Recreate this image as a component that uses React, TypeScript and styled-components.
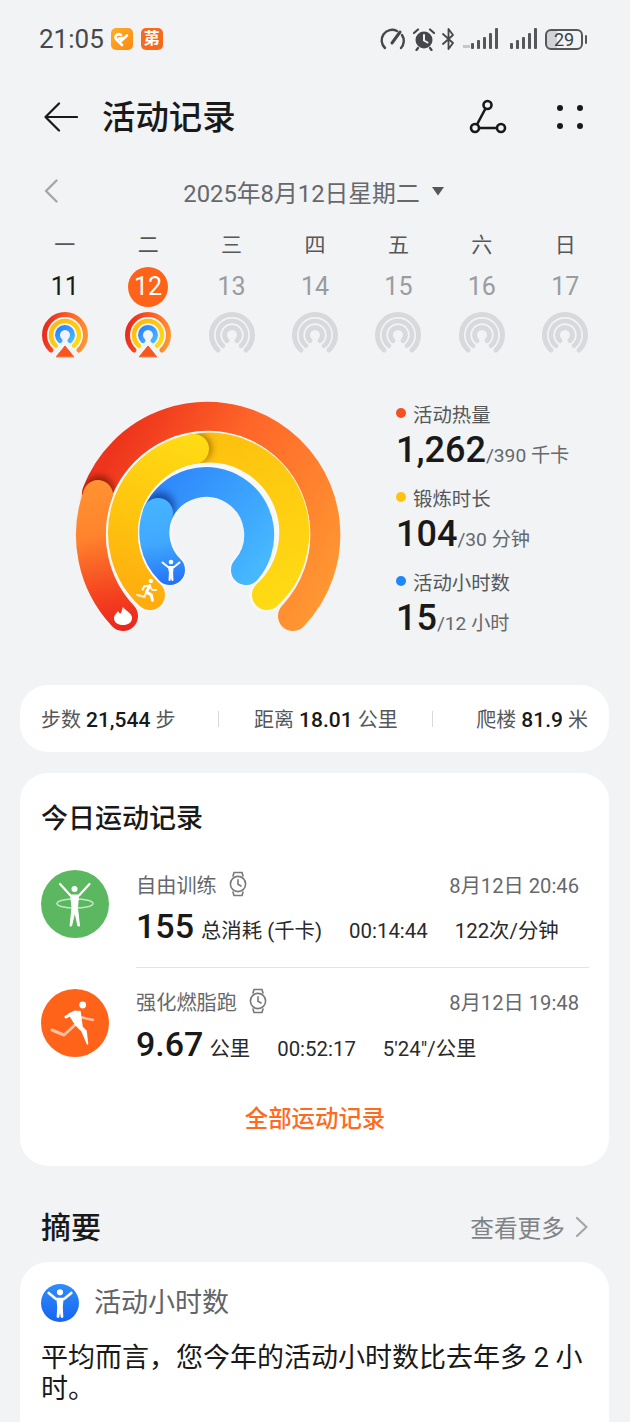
import React from 'react';
import styled, { createGlobalStyle } from 'styled-components';

const GlobalStyle = createGlobalStyle`
  html, body {
    margin: 0;
    padding: 0;
    background: #f1f3f5;
    font-family: Roboto, "Noto Sans CJK SC", sans-serif;
    color: #191919;
  }
`;

const Page = styled.div`
  width: 630px;
  height: 1422px;
  overflow: hidden;
  background: #f1f3f5;
`;

const StatusBar = styled.div`
  height: 78px;
  padding: 0 42px 0 39px;
  box-sizing: border-box;
  display: flex;
  align-items: center;
  color: #45474a;
`;

const Time = styled.span`
  font-size: 26px;
  line-height: 1;
  margin-right: 7px;
`;

const AppBadge = styled.div<{ $bg: string }>`
  width: 22px;
  height: 22px;
  border-radius: 5px;
  background: ${({ $bg }) => $bg};
  margin-right: 8px;
  display: flex;
  align-items: center;
  justify-content: center;
  color: #fff;
  font-size: 16px;
  line-height: 1;
  font-weight: 700;
  overflow: hidden;
`;

const StatusIcons = styled.div`
  margin-left: auto;
  display: flex;
  align-items: center;
`;

const Glyph = styled.span<{ $left?: number }>`
  display: flex;
  margin-left: ${({ $left }) => $left ?? 0}px;
`;

const Battery = styled.div`
  width: 38px;
  height: 21px;
  margin-left: 8px;
  margin-right: 5px;
  box-sizing: border-box;
  border: 2px solid #55575a;
  border-radius: 6px;
  background: linear-gradient(90deg, #d0d2d5 30%, #f1f3f5 30%);
  font-size: 18px;
  line-height: 17px;
  text-align: center;
  color: #3b3d40;
  position: relative;
  &::after {
    content: '';
    position: absolute;
    right: -6px;
    top: 4px;
    width: 2px;
    height: 9px;
    background: #55575a;
    border-radius: 1px;
  }
`;

const Header = styled.div`
  height: 78px;
  padding: 0 46px 0 44px;
  display: flex;
  align-items: center;
`;

const Title = styled.h1`
  margin: 1px 0 0 24px;
  font-size: 33.4px;
  line-height: 1;
  font-weight: 500;
  color: #191919;
`;

const HeaderActions = styled.div`
  margin-left: auto;
  display: flex;
  align-items: center;
  gap: 49px;
`;

const DateRow = styled.div`
  height: 70px;
  position: relative;
  display: flex;
  align-items: center;
  justify-content: center;
  color: #66686b;
  font-size: 23.8px;
  gap: 11px;
  padding-right: 2px;
`;

const DatePrev = styled.svg`
  position: absolute;
  left: 44px;
  top: 23px;
`;

const WeekGrid = styled.div`
  padding: 0 23px;
  display: grid;
  grid-template-columns: repeat(7, 1fr);
`;

const DayColumn = styled.div`
  display: flex;
  flex-direction: column;
  align-items: center;
`;

const WeekDay = styled.div`
  height: 38px;
  font-size: 21px;
  line-height: 38px;
  color: #55575a;
`;

const DayNumber = styled.div<{ $state: 'done' | 'today' | 'future' }>`
  width: 40px;
  height: 40px;
  margin-top: 3px;
  border-radius: 50%;
  font-size: 25px;
  line-height: 40px;
  text-align: center;
  color: ${({ $state }) => ($state === 'done' ? '#191919' : $state === 'today' ? '#fff' : '#9a9c9f')};
  background: ${({ $state }) => ($state === 'today' ? '#fe6319' : 'transparent')};
`;

const MiniRingSvg = styled.svg`
  display: block;
  margin-top: 4px;
`;

const ChartSection = styled.div`
  margin-top: 29px;
  height: 297px;
  padding-left: 60px;
  display: flex;
  align-items: flex-start;
`;

const ChartSvg = styled.svg`
  display: block;
  flex: none;
`;

const Legend = styled.div`
  margin-left: 26px;
  padding-top: 12px;
  display: flex;
  flex-direction: column;
`;

const LegendItem = styled.div`
  height: 84px;
`;

const LegendLabel = styled.div<{ $dot: string }>`
  height: 26px;
  display: flex;
  align-items: center;
  gap: 7px;
  font-size: 19.4px;
  color: #55575a;
  &::before {
    content: '';
    width: 10px;
    height: 10px;
    border-radius: 50%;
    background: ${({ $dot }) => $dot};
  }
`;

const LegendValue = styled.div`
  height: 48px;
  display: flex;
  align-items: baseline;
  font-size: 19.2px;
  color: #66686b;
  line-height: 48px;
`;

const BigNumber = styled.span<{ $size?: number }>`
  font-size: ${({ $size }) => $size ?? 36}px;
  font-weight: 500;
  color: #191919;
`;

const StatsCard = styled.div`
  margin: 0 21px 0 20px;
  height: 67px;
  background: #fff;
  border-radius: 28px;
  display: flex;
  align-items: center;
  justify-content: space-between;
  padding: 0 21px;
  font-size: 20px;
  color: #55575a;
`;

const Stat = styled.div`
  white-space: nowrap;
  b {
    font-weight: 500;
    font-size: 21px;
    color: #191919;
    margin: 0 5px;
  }
`;

const StatDivider = styled.div<{ $shift: number }>`
  width: 1px;
  height: 16px;
  background: #d8d9db;
  margin: 0 ${({ $shift }) => -$shift}px 0 ${({ $shift }) => $shift}px;
`;

const Card = styled.div`
  margin: 21px 21px 0 20px;
  background: #fff;
  border-radius: 28px;
`;

const RecordsCard = styled(Card)`
  height: 393px;
  padding: 30px 20px 0 21px;
  box-sizing: border-box;
`;

const CardTitle = styled.h2`
  margin: 0;
  font-size: 27px;
  line-height: 32px;
  font-weight: 500;
  color: #191919;
`;

const RecordRow = styled.div`
  display: flex;
  height: 118px;
  align-items: flex-start;
  &:first-of-type {
    margin-top: 16px;
    height: 117px;
  }
`;

const RecordIcon = styled.div<{ $bg: string; $top: number }>`
  width: 68px;
  height: 68px;
  margin-top: ${({ $top }) => $top}px;
  border-radius: 50%;
  background: ${({ $bg }) => $bg};
  display: flex;
  align-items: center;
  justify-content: center;
  flex: none;
`;

const RecordBody = styled.div<{ $border?: boolean; $top: number }>`
  flex: 1;
  margin-left: 27px;
  padding-top: ${({ $top }) => $top}px;
  height: 100%;
  box-sizing: border-box;
  border-bottom: ${({ $border }) => ($border ? '1px solid #e2e3e5' : 'none')};
`;

const RecordHead = styled.div`
  display: flex;
  align-items: center;
  height: 28px;
  padding-right: 10px;
  font-size: 20.2px;
  color: #66686b;
  gap: 11px;
`;

const RecordDate = styled.span`
  margin-left: auto;
`;

const RecordValues = styled.div<{ $top: number }>`
  margin-top: ${({ $top }) => $top}px;
  display: flex;
  align-items: baseline;
  height: 44px;
  line-height: 44px;
  font-size: 20.4px;
  color: #2a2a2a;
`;

const ValueGap = styled.span<{ $left: number }>`
  margin-left: ${({ $left }) => $left}px;
`;

const AllLink = styled.div`
  text-align: center;
  font-size: 23.4px;
  line-height: 30px;
  font-weight: 500;
  color: #ff6a20;
  margin-top: 18px;
`;

const SummaryHeader = styled.div`
  margin-top: 40px;
  height: 44px;
  padding: 0 42px 0 41px;
  display: flex;
  align-items: center;
`;

const SummaryTitle = styled.h2`
  margin: 0;
  font-size: 30px;
  font-weight: 500;
  line-height: 44px;
  color: #191919;
`;

const MoreLink = styled.div`
  margin-left: auto;
  margin-bottom: 3px;
  display: flex;
  align-items: center;
  gap: 10px;
  font-size: 23.7px;
  color: #808285;
`;

const SummaryCard = styled(Card)`
  margin-top: 12px;
  height: 220px;
  padding: 22px 21px 0;
  box-sizing: border-box;
`;

const SummaryHead = styled.div`
  display: flex;
  align-items: center;
  gap: 15px;
  font-size: 27px;
  line-height: 38px;
  color: #626467;
`;

const SummaryBadge = styled.div`
  width: 38px;
  height: 38px;
  border-radius: 50%;
  background: linear-gradient(180deg, #2f8dfa, #1764f0);
  display: flex;
  align-items: center;
  justify-content: center;
`;

const SummaryText = styled.p`
  margin: 21px 0 0;
  font-size: 27px;
  line-height: 31px;
  color: #191919;
`;

const PersonShape = () => (
    <>
        <circle cx="12" cy="4" r="2.3" fill="#fff" stroke="none" />
        <path d="M3.5 4.5 L9 9 H15 L20.5 4.5" strokeWidth="2" />
        <path d="M9.8 9 H14.2 L13.6 15 L14 22.5 H13 L12 16 L11 22.5 H10 L10.4 15 Z" fill="#fff" strokeWidth="1" />
    </>
);

const RunnerShape = () => (
    <>
        <circle cx="15.5" cy="3.6" r="2" fill="#fff" stroke="none" />
        <path d="M14.5 8 L11.5 14 L16 16.5 L17 21.5" strokeWidth="2.7" />
        <path d="M14.5 8 L9.5 8.5 L8 11.5" strokeWidth="1.9" />
        <path d="M14.5 8.5 L17 12 H20.5" strokeWidth="1.7" opacity="0.85" />
        <path d="M11 15 L9.5 18.5 L3 16.5" strokeWidth="2" opacity="0.8" />
    </>
);

const BigRunner = () => (
    <svg width="52" height="52" viewBox="0 0 52 52" fill="none" stroke="#fff" strokeLinecap="round" strokeLinejoin="round">
        <circle cx="33.7" cy="8" r="3.4" fill="#fff" stroke="none" />
        <path d="M31 20 L44 23" strokeWidth="2.4" opacity="0.6" />
        <path d="M28 26 L15 38 L3 33" strokeWidth="3" opacity="0.6" />
        <path d="M20 17 L26 14.5 H31 L33 30 L37 34 L38.5 47 L33 34 L27 28 Z" fill="#fff" strokeWidth="1.6" />
        <path d="M26 15 L17 20" strokeWidth="3" />
    </svg>
);

const Hoop = () => (
    <svg width="56" height="56" viewBox="0 0 56 56" fill="none" stroke="#fff" strokeLinecap="round" strokeLinejoin="round">
        <circle cx="27.5" cy="13" r="3" fill="#fff" stroke="none" />
        <path d="M13 8 L23.5 19.5 H32 L42.5 8" strokeWidth="2.2" />
        <path d="M24 19.5 H31.5 L30.5 32 L32.5 50 H31 L27.8 36 L24.5 50 H23 L25 32 Z" fill="#fff" strokeWidth="1" />
        <ellipse cx="28" cy="27.5" rx="18" ry="4.6" strokeWidth="1.5" opacity="0.65" />
    </svg>
);

const WatchIcon = () => (
    <svg width="20" height="26" viewBox="0 0 20 26" fill="none" stroke="#77797c" strokeWidth="1.6" strokeLinecap="round">
        <path d="M5 5 L6 1.5 H14 L15 5 M5 21 L6 24.5 H14 L15 21" />
        <circle cx="10" cy="13" r="7.6" />
        <path d="M10 8.8 V13.2 L13 15" />
    </svg>
);

const arcPath = (cx: number, cy: number, r: number, a: number[], b: number[], large: number, sweep = 1) =>
    `M${cx + a[0]} ${cy + a[1]} A${r} ${r} 0 ${large} ${sweep} ${cx + b[0]} ${cy + b[1]}`;

const CX = 208;
const CY = 535;
const GAP = '#f7f8f9';

const ActivityChart = () => (
    <ChartSvg width="310" height="260" viewBox="60 390 310 260" fill="none" strokeLinecap="round">
        <defs>
            <linearGradient id="outerBg" gradientUnits="userSpaceOnUse" x1="90" y1="490" x2="310" y2="625">
                <stop offset="0" stopColor="#ee341c" />
                <stop offset="0.4" stopColor="#ff6629" />
                <stop offset="1" stopColor="#ff9832" />
            </linearGradient>
            <linearGradient id="outerFg" gradientUnits="userSpaceOnUse" x1="97" y1="485" x2="125" y2="630">
                <stop offset="0" stopColor="#ff9232" />
                <stop offset="0.35" stopColor="#ff832d" />
                <stop offset="0.75" stopColor="#f5431f" />
                <stop offset="1" stopColor="#ea271d" />
            </linearGradient>
            <linearGradient id="midBg" gradientUnits="userSpaceOnUse" x1="205" y1="435" x2="285" y2="610">
                <stop offset="0" stopColor="#fdbf0e" />
                <stop offset="1" stopColor="#ffdc14" />
            </linearGradient>
            <linearGradient id="midFg" gradientUnits="userSpaceOnUse" x1="205" y1="440" x2="150" y2="612">
                <stop offset="0" stopColor="#ffdc14" />
                <stop offset="0.55" stopColor="#fec30e" />
                <stop offset="1" stopColor="#feab0e" />
            </linearGradient>
            <linearGradient id="innerBg" gradientUnits="userSpaceOnUse" x1="150" y1="490" x2="255" y2="575">
                <stop offset="0" stopColor="#2d85fa" />
                <stop offset="1" stopColor="#46b8ff" />
            </linearGradient>
            <linearGradient id="innerFg" gradientUnits="userSpaceOnUse" x1="158" y1="500" x2="172" y2="587">
                <stop offset="0" stopColor="#46b4ff" />
                <stop offset="0.5" stopColor="#40a9ff" />
                <stop offset="1" stopColor="#2470f5" />
            </linearGradient>
            <filter id="soft" x="-60%" y="-60%" width="220%" height="220%">
                <feGaussianBlur stdDeviation="3" />
            </filter>
            <mask id="outerMask" maskUnits="userSpaceOnUse" x="60" y="390" width="310" height="260">
                <circle cx={CX} cy={CY} r="118" stroke="#fff" strokeWidth="30" />
            </mask>
            <mask id="midMask" maskUnits="userSpaceOnUse" x="60" y="390" width="310" height="260">
                <circle cx={CX} cy={CY} r="85" stroke="#fff" strokeWidth="30" />
            </mask>
            <mask id="innerMask" maskUnits="userSpaceOnUse" x="60" y="390" width="310" height="260">
                <circle cx={CX} cy={CY} r="53" stroke="#fff" strokeWidth="30" />
            </mask>
        </defs>

        <path d={arcPath(CX, CY, 118, [-111, -40], [85, 83], 1)} stroke="url(#outerBg)" strokeWidth="30" />
        <g mask="url(#outerMask)">
            <circle cx="99" cy="493" r="15" fill="#5a1000" opacity="0.6" filter="url(#soft)" />
        </g>
        <path d={arcPath(CX, CY, 118, [-110, -38], [-85, 83], 0, 0)} stroke="url(#outerFg)" strokeWidth="30" />

        <path d={arcPath(CX, CY, 85, [-58, 62], [58, 62], 1)} stroke={GAP} strokeWidth="34" />
        <path d={arcPath(CX, CY, 85, [-14, -84], [59, 62], 0)} stroke="url(#midBg)" strokeWidth="30" />
        <g mask="url(#midMask)">
            <circle cx="197" cy="450" r="15" fill="#7a4a00" opacity="0.55" filter="url(#soft)" />
        </g>
        <path d={arcPath(CX, CY, 85, [-14, -84], [-58, 62], 0, 0)} stroke="url(#midFg)" strokeWidth="30" />

        <path d={arcPath(CX, CY, 53, [-38, 37], [38, 37], 1)} stroke={GAP} strokeWidth="34" />
        <path d={arcPath(CX, CY, 53, [-50, -20], [38, 37], 1)} stroke="url(#innerBg)" strokeWidth="30" />
        <g mask="url(#innerMask)">
            <circle cx="160" cy="509" r="15" fill="#0a2c80" opacity="0.6" filter="url(#soft)" />
        </g>
        <path d={arcPath(CX, CY, 53, [-50, -20], [-38, 37], 0, 0)} stroke="url(#innerFg)" strokeWidth="30" />

        <path d="M123 609 C126 613 132 615 132 620 C132 624.5 128 627 123 627 C118 627 114 624.5 114 620 C114 617 117 615 118 613 C119 615 120 616 121 615 C122 613 122 611 123 609 Z" fill="#fff" />
        <svg x="134" y="579" width="26" height="26" viewBox="0 0 24 24" fill="none" stroke="#fff" strokeLinecap="round" strokeLinejoin="round">
            <RunnerShape />
        </svg>
        <svg x="159" y="560" width="24" height="24" viewBox="0 0 24 24" fill="none" stroke="#fff" strokeLinecap="round" strokeLinejoin="round">
            <PersonShape />
        </svg>
    </ChartSvg>
);

const MiniRing = ({ active }: { active: boolean }) => {
    const c = 24;
    const arc = (r: number, dx: number) => {
        const dy = Math.sqrt(r * r - dx * dx);
        return `M${c - dx} ${c + dy} A${r} ${r} 0 1 1 ${c + dx} ${c + dy}`;
    };
    return (
        <MiniRingSvg width="48" height="48" viewBox="0 0 48 48" fill="none" strokeLinecap="round">
            <defs>
                <linearGradient id="miniOuter" x1="0" y1="0.5" x2="1" y2="0.7">
                    <stop offset="0" stopColor="#ea2d1d" />
                    <stop offset="0.5" stopColor="#fd6227" />
                    <stop offset="1" stopColor="#ff9432" />
                </linearGradient>
                <linearGradient id="miniMid" x1="0" y1="0" x2="1" y2="1">
                    <stop offset="0" stopColor="#feb60e" />
                    <stop offset="1" stopColor="#ffdc14" />
                </linearGradient>
                <linearGradient id="miniInner" x1="0" y1="0" x2="1" y2="1">
                    <stop offset="0" stopColor="#2d80fa" />
                    <stop offset="1" stopColor="#46b8ff" />
                </linearGradient>
            </defs>
            <path d={arc(20.5, 14)} stroke={active ? 'url(#miniOuter)' : '#d8d9dc'} strokeWidth="5" />
            <path d={arc(14, 9)} stroke={active ? '#fafbfb' : 'none'} strokeWidth="6" />
            <path d={arc(14, 9)} stroke={active ? 'url(#miniMid)' : '#d8d9dc'} strokeWidth="4.6" />
            <path d={arc(7.5, 5)} stroke={active ? 'url(#miniInner)' : '#d8d9dc'} strokeWidth="5" />
            {active && <path d="M15.5 45.5 L24 35 L32.5 45.5 Z" fill="#f9561f" stroke="#f9561f" strokeWidth="1" strokeLinejoin="round" />}
        </MiniRingSvg>
    );
};

const Signal = ({ faded }: { faded?: boolean }) => (
    <svg width={faded ? 36 : 27} height="22" viewBox={faded ? '0 0 36 22' : '9 0 27 22'} fill="#55575a">
        {faded && <rect x="1" y="17" width="7" height="3" fill="#c5c7ca" />}
        <rect x="9" y="15" width="3" height="6" rx="1" />
        <rect x="15" y="12" width="3" height="9" rx="1" />
        <rect x="21" y="9" width="3" height="12" rx="1" />
        <rect x="27" y="5" width="3" height="16" rx="1" />
        <rect x="33" y="0" width="3" height="21" rx="1" />
    </svg>
);

const days: { name: string; num: number; state: 'done' | 'today' | 'future' }[] = [
    { name: '一', num: 11, state: 'done' },
    { name: '二', num: 12, state: 'today' },
    { name: '三', num: 13, state: 'future' },
    { name: '四', num: 14, state: 'future' },
    { name: '五', num: 15, state: 'future' },
    { name: '六', num: 16, state: 'future' },
    { name: '日', num: 17, state: 'future' },
];

const legend = [
    { label: '活动热量', dot: '#f4511e', value: '1,262', goal: '/390 千卡' },
    { label: '锻炼时长', dot: '#ffc20e', value: '104', goal: '/30 分钟' },
    { label: '活动小时数', dot: '#1e88fa', value: '15', goal: '/12 小时' },
];

const App = () => (
    <Page>
        <GlobalStyle />
        <StatusBar>
            <Time>21:05</Time>
            <AppBadge $bg="linear-gradient(135deg, #ffae26, #fb8a12)">
                <svg width="18" height="18" viewBox="0 0 18 18" fill="none" stroke="#fff" strokeWidth="2.6" strokeLinecap="round" strokeLinejoin="round">
                    <path d="M9 15 L3 9 C1.5 6 4.5 2.5 8 5 M8 11 L14 5.5 M6 8.5 L9.5 8" />
                </svg>
            </AppBadge>
            <AppBadge $bg="#f56a1e">苐</AppBadge>
            <StatusIcons>
                <Glyph>
                    <svg width="26" height="24" viewBox="0 0 26 24" fill="none" stroke="#45474a" strokeWidth="2.4" strokeLinecap="round">
                        <path d="M5 21 A10.5 10.5 0 0 1 17 4 M22 8 A10.5 10.5 0 0 1 21 21" />
                        <path d="M12 16 L20 5" strokeWidth="3" />
                    </svg>
                </Glyph>
                <Glyph $left={6}>
                    <svg width="24" height="24" viewBox="0 0 24 24" fill="#45474a" stroke="#45474a" strokeLinecap="round">
                        <circle cx="12" cy="13" r="8.5" stroke="none" />
                        <path d="M2 6 L6 2.5 M22 6 L18 2.5 M6 21 L4.5 23 M18 21 L19.5 23" fill="none" strokeWidth="2.2" />
                        <path d="M12 8 V13.5 L15.5 15.5" fill="none" stroke="#f1f3f5" strokeWidth="2" />
                    </svg>
                </Glyph>
                <Glyph $left={6}>
                    <svg width="13" height="24" viewBox="0 0 13 24" fill="none" stroke="#45474a" strokeWidth="1.8" strokeLinecap="round" strokeLinejoin="round">
                        <path d="M1 7 L11 16 L6.5 22 V2 L11 8 L1 17" />
                    </svg>
                </Glyph>
                <Glyph $left={7}><Signal faded /></Glyph>
                <Glyph $left={12}><Signal /></Glyph>
                <Battery>29</Battery>
            </StatusIcons>
        </StatusBar>

        <Header>
            <svg width="34" height="30" viewBox="0 0 34 30" fill="none" stroke="#191919" strokeWidth="2.2" strokeLinecap="round" strokeLinejoin="round">
                <path d="M15 1.5 L1.5 15 L15 28.5 M1.5 15 H33" />
            </svg>
            <Title>活动记录</Title>
            <HeaderActions>
                <svg width="38" height="36" viewBox="0 0 38 36" fill="none" stroke="#191919" strokeWidth="2.6">
                    <circle cx="18.5" cy="6" r="4" />
                    <circle cx="6" cy="29" r="4" />
                    <circle cx="32" cy="29" r="4" />
                    <path d="M16.5 9.5 L8 25.5 M10 29 H28" />
                </svg>
                <svg width="28" height="28" viewBox="0 0 28 28" fill="#191919">
                    <circle cx="4" cy="5" r="3" />
                    <circle cx="24" cy="5" r="3" />
                    <circle cx="4" cy="23" r="3" />
                    <circle cx="24" cy="23" r="3" />
                </svg>
            </HeaderActions>
        </Header>

        <DateRow>
            <DatePrev width="14" height="24" viewBox="0 0 14 24" fill="none" stroke="#a4a6a9" strokeWidth="2.4" strokeLinecap="round" strokeLinejoin="round">
                <path d="M12.5 1.5 L2 12 L12.5 22.5" />
            </DatePrev>
            <span>2025年8月12日星期二</span>
            <svg width="14" height="10" viewBox="0 0 14 10" fill="#55575a">
                <path d="M1 1 H13 L7 9.5 Z" />
            </svg>
        </DateRow>

        <WeekGrid>
            {days.map((d) => (
                <DayColumn key={d.num}>
                    <WeekDay>{d.name}</WeekDay>
                    <DayNumber $state={d.state}>{d.num}</DayNumber>
                    <MiniRing active={d.state !== 'future'} />
                </DayColumn>
            ))}
        </WeekGrid>

        <ChartSection>
            <ActivityChart />
            <Legend>
                {legend.map((l) => (
                    <LegendItem key={l.label}>
                        <LegendLabel $dot={l.dot}>{l.label}</LegendLabel>
                        <LegendValue>
                            <BigNumber>{l.value}</BigNumber>
                            {l.goal}
                        </LegendValue>
                    </LegendItem>
                ))}
            </Legend>
        </ChartSection>

        <StatsCard>
            <Stat>步数<b>21,544</b>步</Stat>
            <StatDivider $shift={4} />
            <Stat>距离<b>18.01</b>公里</Stat>
            <StatDivider $shift={-4} />
            <Stat>爬楼<b>81.9</b>米</Stat>
        </StatsCard>

        <RecordsCard>
            <CardTitle>今日运动记录</CardTitle>
            <RecordRow>
                <RecordIcon $bg="#5cb860" $top={19}><Hoop /></RecordIcon>
                <RecordBody $border $top={19}>
                    <RecordHead>
                        自由训练
                        <WatchIcon />
                        <RecordDate>8月12日 20:46</RecordDate>
                    </RecordHead>
                    <RecordValues $top={6}>
                        <BigNumber $size={34}>155</BigNumber>
                        <ValueGap $left={7}>总消耗 (千卡)</ValueGap>
                        <ValueGap $left={27}>00:14:44</ValueGap>
                        <ValueGap $left={27}>122次/分钟</ValueGap>
                    </RecordValues>
                </RecordBody>
            </RecordRow>
            <RecordRow>
                <RecordIcon $bg="#fe6319" $top={21}><BigRunner /></RecordIcon>
                <RecordBody $top={19}>
                    <RecordHead>
                        强化燃脂跑
                        <WatchIcon />
                        <RecordDate>8月12日 19:48</RecordDate>
                    </RecordHead>
                    <RecordValues $top={7}>
                        <BigNumber $size={34}>9.67</BigNumber>
                        <ValueGap $left={6}>公里</ValueGap>
                        <ValueGap $left={27}>00:52:17</ValueGap>
                        <ValueGap $left={27}>5'24"/公里</ValueGap>
                    </RecordValues>
                </RecordBody>
            </RecordRow>
            <AllLink>全部运动记录</AllLink>
        </RecordsCard>

        <SummaryHeader>
            <SummaryTitle>摘要</SummaryTitle>
            <MoreLink>
                查看更多
                <svg width="13" height="22" viewBox="0 0 13 22" fill="none" stroke="#a4a6a9" strokeWidth="2.2" strokeLinecap="round" strokeLinejoin="round">
                    <path d="M2 2 L11.5 11 L2 20" />
                </svg>
            </MoreLink>
        </SummaryHeader>

        <SummaryCard>
            <SummaryHead>
                <SummaryBadge>
                    <svg width="32" height="32" viewBox="0 0 24 24" fill="none" stroke="#fff" strokeLinecap="round" strokeLinejoin="round">
                        <PersonShape />
                    </svg>
                </SummaryBadge>
                活动小时数
            </SummaryHead>
            <SummaryText>平均而言，您今年的活动小时数比去年多 2 小时。</SummaryText>
        </SummaryCard>
    </Page>
);

export default App;
